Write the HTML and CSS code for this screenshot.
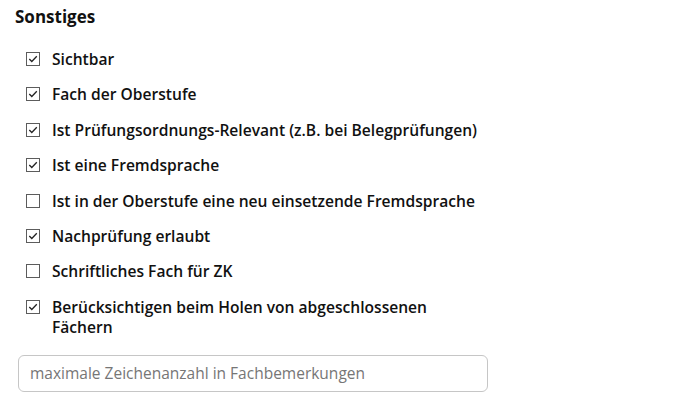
FILE: index.html
```html
<!DOCTYPE html>
<html lang="de">
<head>
<meta charset="utf-8">
<link rel="stylesheet" href="styles.css">
</head>
<body>
<section class="panel">
  <h2 class="title">Sonstiges</h2>
  <ul class="options">
    <li class="option"><span class="box checked"><svg viewBox="0 0 13 13"><path d="M2.5 6.5 L5.2 9.2 L10.6 3.6"/></svg></span><span class="label">Sichtbar</span></li>
    <li class="option"><span class="box checked"><svg viewBox="0 0 13 13"><path d="M2.5 6.5 L5.2 9.2 L10.6 3.6"/></svg></span><span class="label">Fach der Oberstufe</span></li>
    <li class="option"><span class="box checked"><svg viewBox="0 0 13 13"><path d="M2.5 6.5 L5.2 9.2 L10.6 3.6"/></svg></span><span class="label">Ist Prüfungsordnungs-Relevant (z.B. bei Belegprüfungen)</span></li>
    <li class="option"><span class="box checked"><svg viewBox="0 0 13 13"><path d="M2.5 6.5 L5.2 9.2 L10.6 3.6"/></svg></span><span class="label">Ist eine Fremdsprache</span></li>
    <li class="option"><span class="box"></span><span class="label">Ist in der Oberstufe eine neu einsetzende Fremdsprache</span></li>
    <li class="option"><span class="box checked"><svg viewBox="0 0 13 13"><path d="M2.5 6.5 L5.2 9.2 L10.6 3.6"/></svg></span><span class="label">Nachprüfung erlaubt</span></li>
    <li class="option"><span class="box"></span><span class="label">Schriftliches Fach für ZK</span></li>
    <li class="option"><span class="box checked"><svg viewBox="0 0 13 13"><path d="M2.5 6.5 L5.2 9.2 L10.6 3.6"/></svg></span><span class="label">Berücksichtigen beim Holen von abgeschlossenen Fächern</span></li>
  </ul>
  <input class="field" type="text" placeholder="maximale Zeichenanzahl in Fachbemerkungen">
</section>
</body>
</html>
```
FILE: styles.css
```css
html, body {
  margin: 0;
  padding: 0;
  background: #ffffff;
}

body {
  font-family: "Open Sans", "Noto Sans", "Liberation Sans", sans-serif;
  color: #111111;
}

.panel {
  width: 470px;
  padding: 5px 0 0 15px;
}

.title {
  margin: 0;
  font-size: 17px;
  font-weight: 700;
  line-height: 24px;
}

.options {
  list-style: none;
  margin: 20px 0 0 0;
  padding: 0 0 0 11px;
  display: flex;
  flex-direction: column;
  gap: 15.4px;
  width: 455px;
}

.option {
  display: flex;
  align-items: flex-start;
  gap: 12px;
  font-size: 15.6px;
  font-weight: 600;
  line-height: 20px;
}

.box {
  flex: none;
  box-sizing: border-box;
  width: 14px;
  height: 14px;
  margin-top: 3px;
  border: 1.6px solid #5c5c5c;
  background: #ffffff;
  display: flex;
}

.box svg {
  width: 100%;
  height: 100%;
  fill: none;
  stroke: #222222;
  stroke-width: 1.4;
}

.label {
  flex: 1;
  max-width: 432px;
}

.field {
  display: block;
  box-sizing: border-box;
  margin: 18px 0 0 3px;
  width: 470px;
  height: 37px;
  padding: 0 11px;
  border: 1px solid #c6c6c6;
  border-radius: 6px;
  font-family: "Open Sans", "Noto Sans", sans-serif;
  font-size: 15.5px;
  color: #333333;
  background: #ffffff;
  outline: none;
}

.field::placeholder {
  color: #767676;
}
```
